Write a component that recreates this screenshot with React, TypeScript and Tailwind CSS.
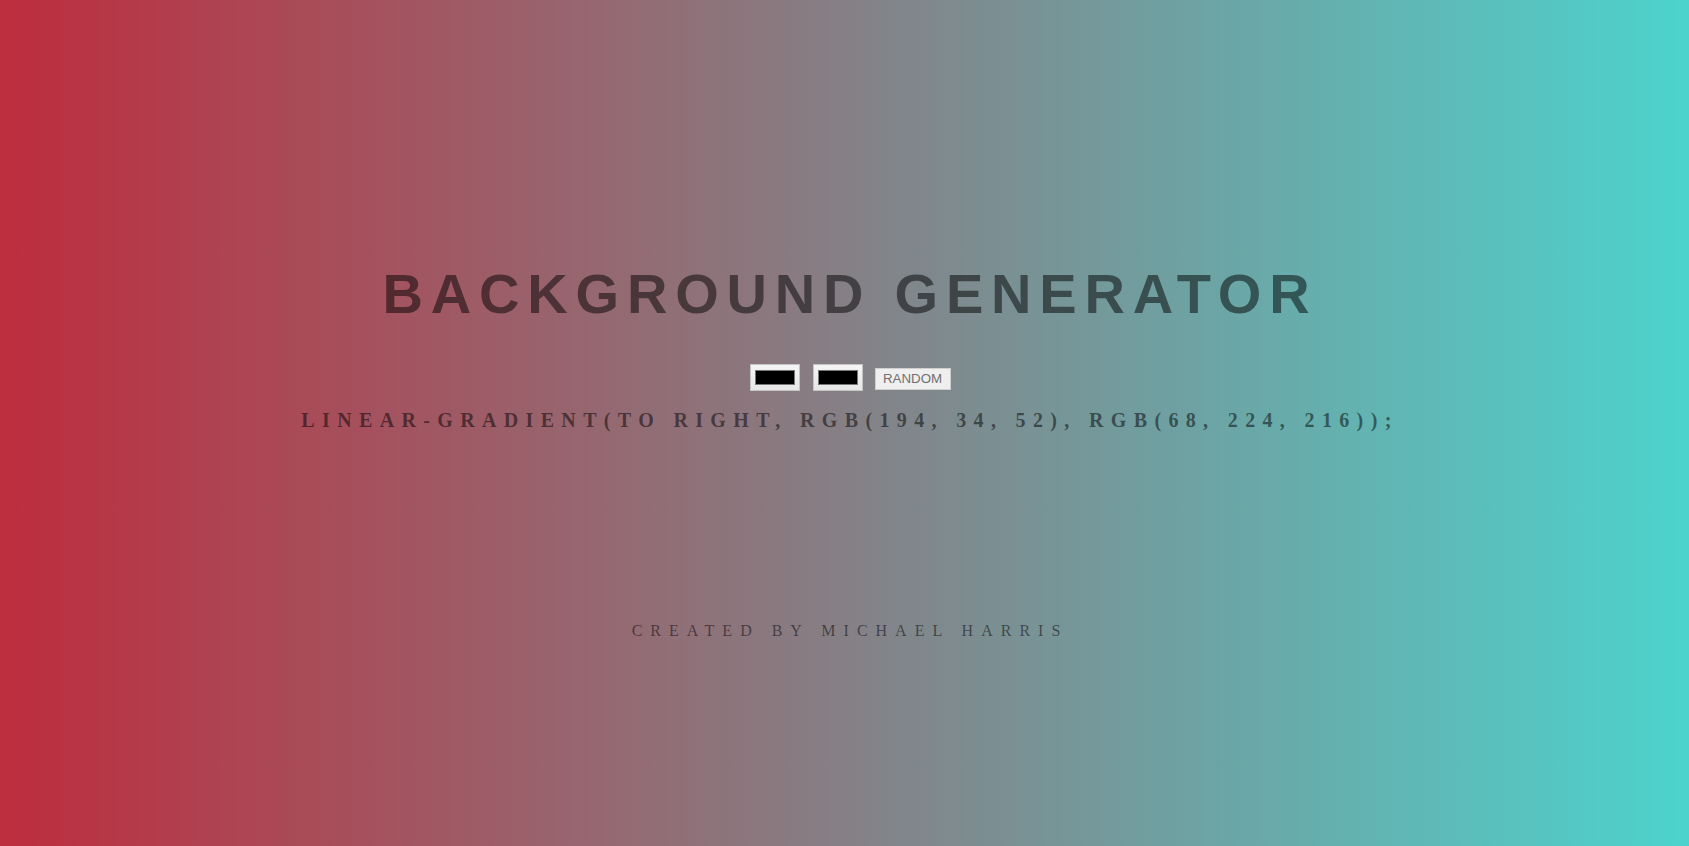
export default function App() {
  return (
    <div className="w-full h-[846px] overflow-hidden bg-[linear-gradient(to_right,#bd2d3e,#4dd3cd)] flex flex-col items-center pl-[11px]">
      <h1 className="mt-[266px] text-[56px] leading-[56px] font-bold tracking-[7.8px] text-black/50 font-['Liberation_Sans',Arial,sans-serif]">
        BACKGROUND GENERATOR
      </h1>

      <div className="mt-[42px] flex items-start">
        <ColorBox />
        <div className="ml-[13px]">
          <ColorBox />
        </div>
        <button className="ml-[12px] mt-[4px] w-[76px] h-[22px] bg-[#efefef] border border-[#cfcfcf] text-[13.33px] leading-none text-[#707070] font-['Liberation_Sans',Arial,sans-serif]">
          RANDOM
        </button>
      </div>

      <h3 className="mt-[19px] text-[20px] leading-[20px] font-bold tracking-[7.35px] text-black/50 font-['Liberation_Serif','Times_New_Roman',serif]">
        LINEAR-GRADIENT(TO RIGHT, RGB(194, 34, 52), RGB(68, 224, 216));
      </h3>

      <p className="mt-[193px] text-[16px] leading-[16px] tracking-[8px] text-black/50 font-['Liberation_Serif','Times_New_Roman',serif]">
        CREATED BY MICHAEL HARRIS
      </p>
    </div>
  );
}

function ColorBox() {
  return (
    <div className="w-[50px] h-[27px] border border-[#c4c4c4] bg-[linear-gradient(#f5f5f5,#e6e6e6)] flex items-center justify-center">
      <div className="w-[40px] h-[15px] border border-[#777777] bg-black" />
    </div>
  );
}
